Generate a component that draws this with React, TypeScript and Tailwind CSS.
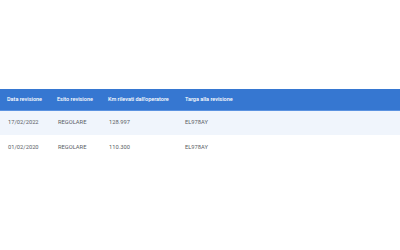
const ROWS = [
  { data: "17/02/2022", esito: "REGOLARE", km: "128.997", targa: "EL978AY" },
  { data: "01/02/2020", esito: "REGOLARE", km: "110.300", targa: "EL978AY" },
];

export default function App() {
  return (
    <div className="h-[250px] w-[400px] bg-white pt-[89px] font-['Roboto',sans-serif]">
      <table className="w-full table-fixed border-collapse whitespace-nowrap text-left">
        <thead>
          <tr className="h-[21px] border-b border-[#5b92e0] bg-[#3677d1] text-[5.5px] text-white">
            <th className="w-[50px] pl-[7px] font-medium">Data revisione</th>
            <th className="w-[51px] pl-[7px] font-medium">Esito revisione</th>
            <th className="w-[77px] pl-[7px] font-medium">Km rilevati dall'operatore</th>
            <th className="pl-[7px] font-medium">Targa alla revisione</th>
          </tr>
        </thead>
        <tbody className="text-[5.75px] text-[#5a6066]">
          {ROWS.map((r, i) => (
            <tr key={i} className={`h-[25px] ${i === 0 ? "bg-[#f0f5fc]" : "bg-white"}`}>
              <td className="pl-[8px]">{r.data}</td>
              <td className="pl-[8px]">{r.esito}</td>
              <td className="pl-[8px]">{r.km}</td>
              <td className="pl-[7px]">{r.targa}</td>
            </tr>
          ))}
        </tbody>
      </table>
    </div>
  );
}
